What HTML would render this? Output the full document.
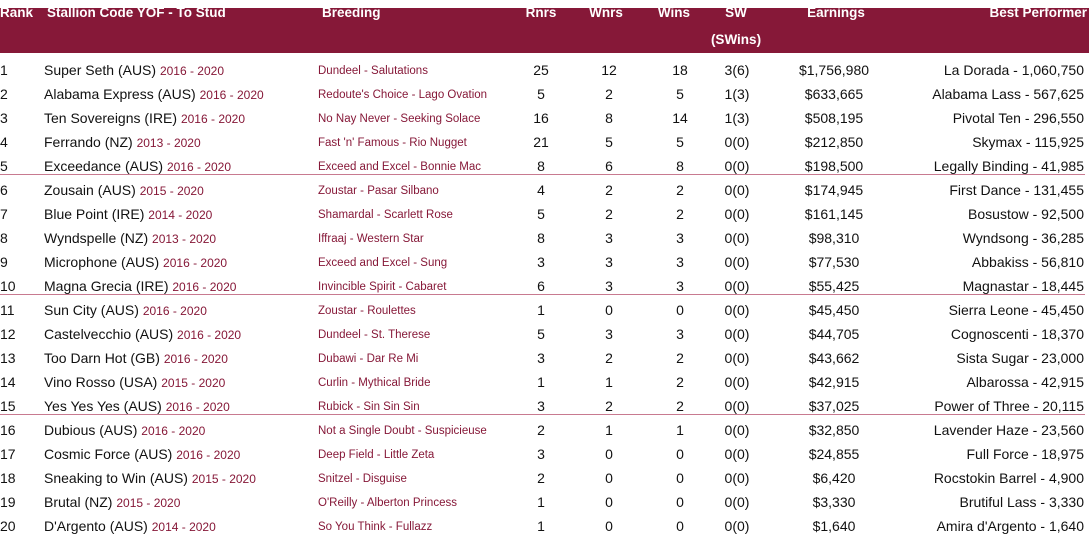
<!DOCTYPE html>
<html><head><style>
body{margin:0;width:1089px;height:555px;background:#fff;font-family:"Liberation Sans",sans-serif;position:relative;overflow:hidden;color:#111}
.hdr{position:absolute;left:0;top:8px;width:1089px;height:45px;background:#861838}
.h{position:absolute;color:#fff;font-weight:bold;font-size:13.5px;top:5px;white-space:nowrap}
.r{position:absolute;left:0;width:1089px;height:24px;font-size:14px;white-space:nowrap}
.r span{position:absolute;top:4px}
.y{color:#861838;font-size:12px}
.br{color:#861838;font-size:11.5px;left:318px;top:7px!important}
.c{transform:translateX(-50%)}
.sep{position:absolute;left:0;width:1085px;height:1px;background:#c87a90}
</style></head><body>
<div class="hdr"></div>
<div class="h" style="left:0">Rank</div>
<div class="h" style="left:47px">Stallion Code YOF - To Stud</div>
<div class="h" style="left:322px">Breeding</div>
<div class="h" style="left:541px;transform:translateX(-50%)">Rnrs</div>
<div class="h" style="left:606px;transform:translateX(-50%)">Wnrs</div>
<div class="h" style="left:674px;transform:translateX(-50%)">Wins</div>
<div class="h" style="left:736px;transform:translateX(-50%)">SW</div>
<div class="h" style="left:736px;top:32px;transform:translateX(-50%)">(SWins)</div>
<div class="h" style="left:836px;transform:translateX(-50%)">Earnings</div>
<div class="h" style="right:2px">Best Performer</div>
<div class="sep" style="top:174px"></div>
<div class="sep" style="top:294px"></div>
<div class="sep" style="top:414px"></div>
<div id="rows"></div>
<script>
var d=[
["1","Super Seth (AUS)","2016 - 2020","Dundeel - Salutations","25","12","18","3(6)","$1,756,980","La Dorada - 1,060,750"],
["2","Alabama Express (AUS)","2016 - 2020","Redoute's Choice - Lago Ovation","5","2","5","1(3)","$633,665","Alabama Lass - 567,625"],
["3","Ten Sovereigns (IRE)","2016 - 2020","No Nay Never - Seeking Solace","16","8","14","1(3)","$508,195","Pivotal Ten - 296,550"],
["4","Ferrando (NZ)","2013 - 2020","Fast 'n' Famous - Rio Nugget","21","5","5","0(0)","$212,850","Skymax - 115,925"],
["5","Exceedance (AUS)","2016 - 2020","Exceed and Excel - Bonnie Mac","8","6","8","0(0)","$198,500","Legally Binding - 41,985"],
["6","Zousain (AUS)","2015 - 2020","Zoustar - Pasar Silbano","4","2","2","0(0)","$174,945","First Dance - 131,455"],
["7","Blue Point (IRE)","2014 - 2020","Shamardal - Scarlett Rose","5","2","2","0(0)","$161,145","Bosustow - 92,500"],
["8","Wyndspelle (NZ)","2013 - 2020","Iffraaj - Western Star","8","3","3","0(0)","$98,310","Wyndsong - 36,285"],
["9","Microphone (AUS)","2016 - 2020","Exceed and Excel - Sung","3","3","3","0(0)","$77,530","Abbakiss - 56,810"],
["10","Magna Grecia (IRE)","2016 - 2020","Invincible Spirit - Cabaret","6","3","3","0(0)","$55,425","Magnastar - 18,445"],
["11","Sun City (AUS)","2016 - 2020","Zoustar - Roulettes","1","0","0","0(0)","$45,450","Sierra Leone - 45,450"],
["12","Castelvecchio (AUS)","2016 - 2020","Dundeel - St. Therese","5","3","3","0(0)","$44,705","Cognoscenti - 18,370"],
["13","Too Darn Hot (GB)","2016 - 2020","Dubawi - Dar Re Mi","3","2","2","0(0)","$43,662","Sista Sugar - 23,000"],
["14","Vino Rosso (USA)","2015 - 2020","Curlin - Mythical Bride","1","1","2","0(0)","$42,915","Albarossa - 42,915"],
["15","Yes Yes Yes (AUS)","2016 - 2020","Rubick - Sin Sin Sin","3","2","2","0(0)","$37,025","Power of Three - 20,115"],
["16","Dubious (AUS)","2016 - 2020","Not a Single Doubt - Suspicieuse","2","1","1","0(0)","$32,850","Lavender Haze - 23,560"],
["17","Cosmic Force (AUS)","2016 - 2020","Deep Field - Little Zeta","3","0","0","0(0)","$24,855","Full Force - 18,975"],
["18","Sneaking to Win (AUS)","2015 - 2020","Snitzel - Disguise","2","0","0","0(0)","$6,420","Rocstokin Barrel - 4,900"],
["19","Brutal (NZ)","2015 - 2020","O'Reilly - Alberton Princess","1","0","0","0(0)","$3,330","Brutiful Lass - 3,330"],
["20","D'Argento (AUS)","2014 - 2020","So You Think - Fullazz","1","0","0","0(0)","$1,640","Amira d'Argento - 1,640"]];
var h="";
d.forEach(function(r,i){
h+='<div class="r" style="top:'+(58+i*24)+'px"><span style="left:0">'+r[0]+'</span><span style="left:44px">'+r[1]+' <span class="y" style="position:static">'+r[2]+'</span></span><span class="br">'+r[3]+'</span>'+
'<span class="c" style="left:541px">'+r[4]+'</span><span class="c" style="left:609px">'+r[5]+'</span><span class="c" style="left:680px">'+r[6]+'</span><span class="c" style="left:737px">'+r[7]+'</span><span class="c" style="left:834px">'+r[8]+'</span><span style="right:5px">'+r[9]+'</span></div>';
});
document.getElementById("rows").innerHTML=h;
</script>
</body></html>
